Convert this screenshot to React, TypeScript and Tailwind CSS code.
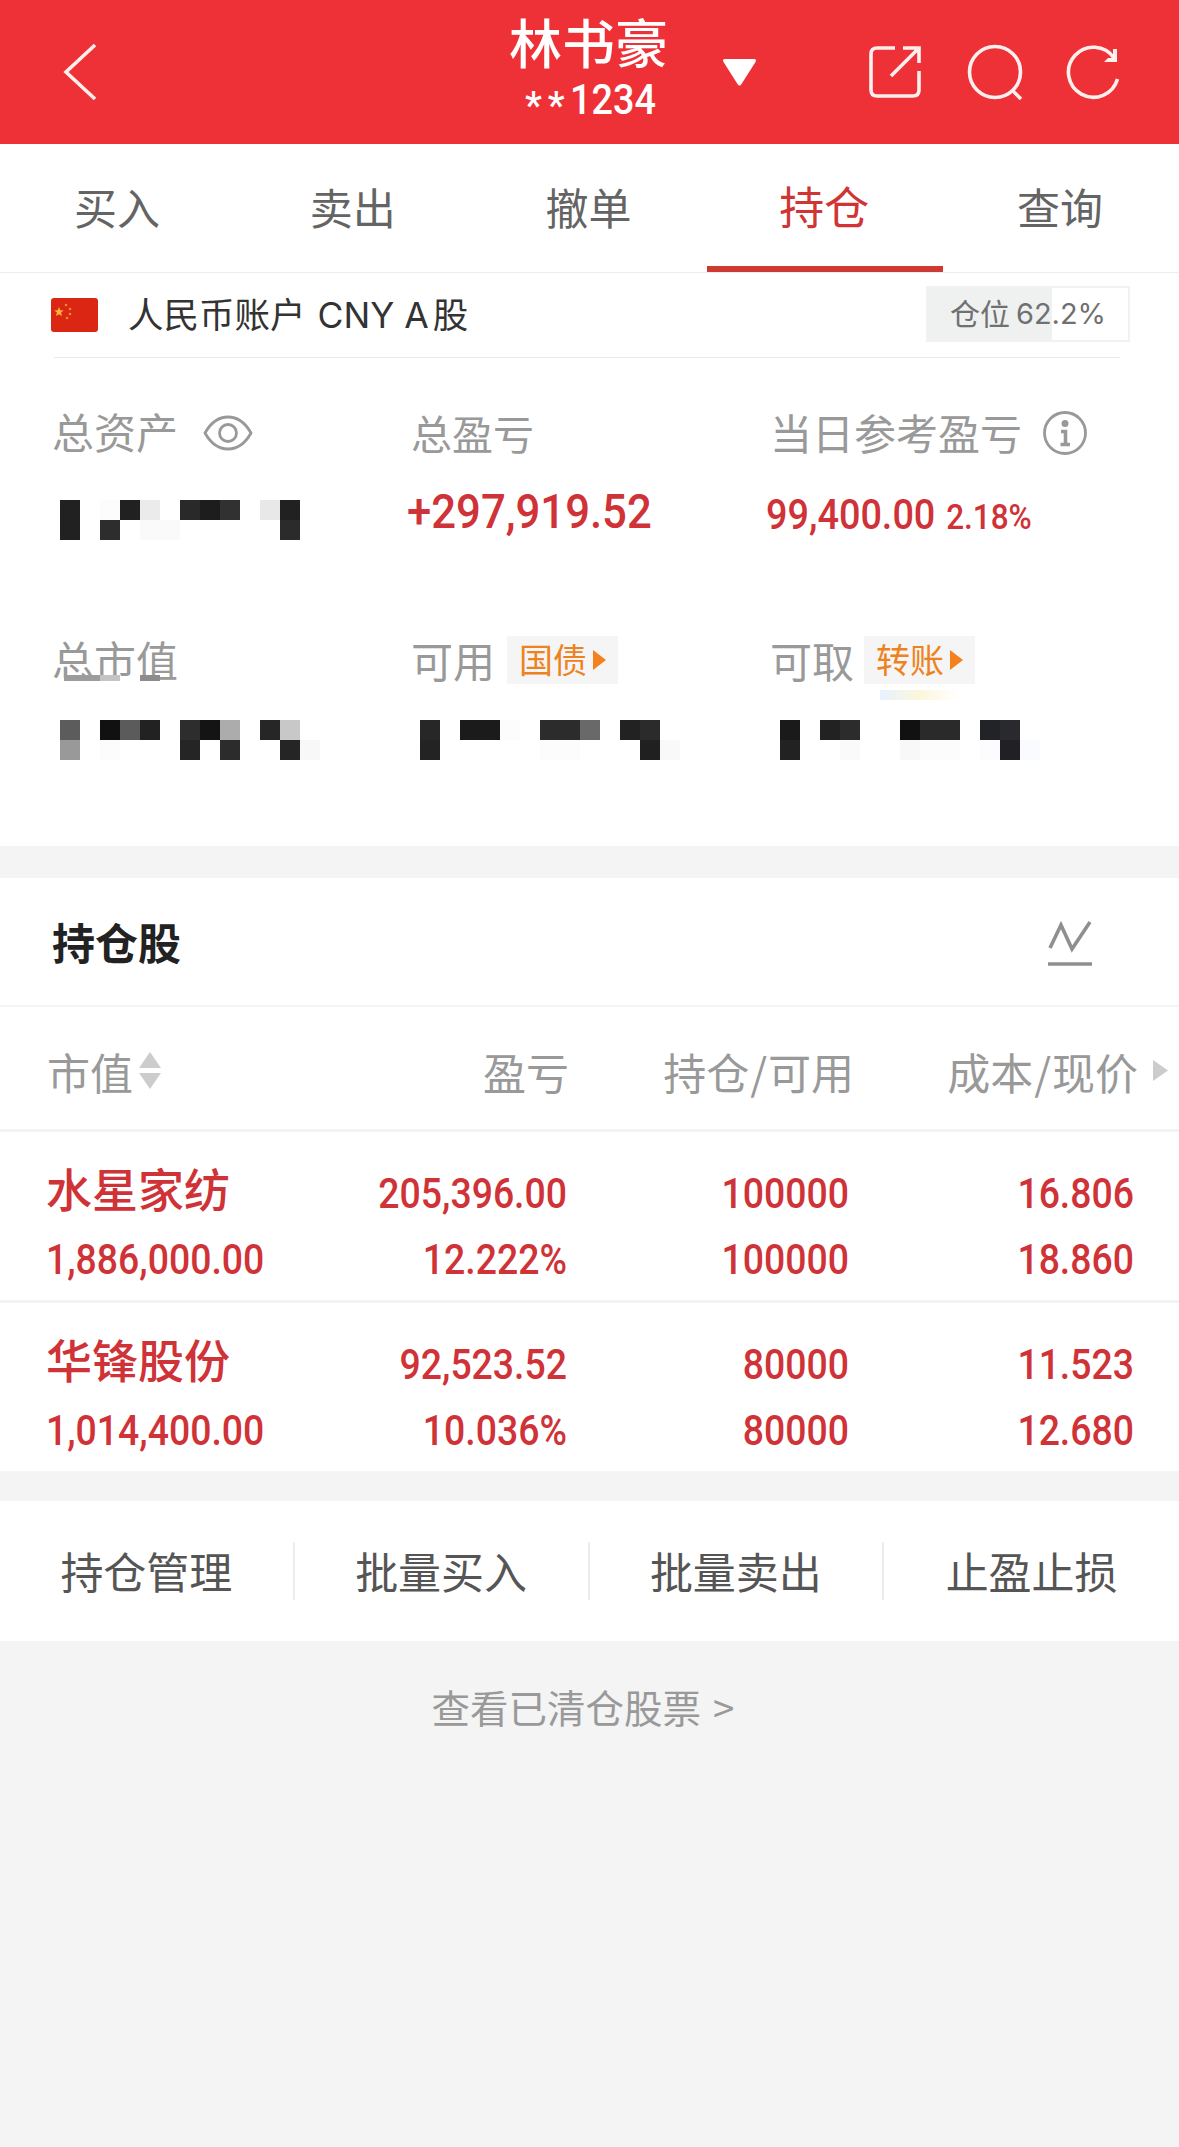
import type { ReactNode } from 'react'
import clsx from 'clsx'

const tabs = ['买入', '卖出', '撤单', '持仓', '查询']
const actions = ['持仓管理', '批量买入', '批量卖出', '止盈止损']

const holdings = [
  {
    name: '水星家纺',
    value: '1,886,000.00',
    profit: '205,396.00',
    rate: '12.222%',
    amount: '100000',
    usable: '100000',
    cost: '16.806',
    price: '18.860',
  },
  {
    name: '华锋股份',
    value: '1,014,400.00',
    profit: '92,523.52',
    rate: '10.036%',
    amount: '80000',
    usable: '80000',
    cost: '11.523',
    price: '12.680',
  },
]

// masked amounts, one colour per 20px block, '' is an empty block
const masks = {
  assets: [
    ['#212121', '', '#fcfcfc', '#212121', '#ebebeb', '', '#292929', '#1d1d1d', '#313131', '', '#e8e8e8', '#212121'],
    ['#212121', '', '#2d2d2d', '', '#fafafa', '#fafafa', '', '', '', '', '', '#2b2b2b'],
  ],
  market: [
    ['#5c5c5c', '', '#111111', '#5b5b5b', '#222222', '', '#2d2d2d', '#141414', '#acacac', '', '#262626', '#c8c8c8'],
    ['#999999', '', '#fcfcfc', '', '', '', '#252525', '', '#2c2c2c', '', '', '#252525', '#f8f8f8'],
  ],
  usable: [
    ['#272727', '', '#1b1b1b', '#1b1b1b', '#fcfcfc', '', '#2c2c2c', '#2c2c2c', '#696969', '', '#222222', '#2b2b2b'],
    ['#232323', '', '', '', '', '', '#fcfcfc', '#fcfcfc', '', '', '', '#202020', '#f9f9f9'],
  ],
  cash: [
    ['#1a1a1a', '', '#222222', '#2c2c2c', '', '', '#111111', '#2a2a2a', '#2a2a2a', '', '#222326', '#2a2a2e'],
    ['#222222', '', '', '#fafafa', '', '', '#f8f8f8', '#fcfcfc', '#fcfcfc', '', '#fcfcff', '#212125', '#fafbff'],
  ],
}

function Mask({ rows }: { rows: string[][] }) {
  return (
    <div className="ml-2">
      {rows.map((row, i) => (
        <div key={i} className="flex h-5">
          {row.map((color, j) => (
            <span key={j} className="h-5 w-5" style={{ backgroundColor: color || 'transparent' }} />
          ))}
        </div>
      ))}
    </div>
  )
}

function Tag({ children }: { children: ReactNode }) {
  return (
    <span className="flex h-12 items-center gap-1.5 bg-[#f5f5f5] px-3 text-[34px] text-[#ef8220]">
      <span className="-translate-y-px">{children}</span>
      <svg width="13" height="20" viewBox="0 0 13 20" fill="#f5801e">
        <path d="M0 0l13 10L0 20z" />
      </svg>
    </span>
  )
}

function Header() {
  return (
    <header className="flex h-36 items-center bg-[#ee3137] text-white">
      <svg className="ml-[63px]" width="34" height="58" viewBox="0 0 34 58" fill="none" stroke="#fff0ee" strokeWidth="3.6">
        <path d="M32 2L3 29l29 27" />
      </svg>
      <div className="mb-[12px] ml-[412px] flex w-[161px] flex-col">
        <span className="h-[67px] text-[53px] leading-[67px] font-medium">林书豪</span>
        <span className="flex h-[50px] items-center pl-4 font-[Roboto] text-[42px] leading-[50px] font-medium">
          <span className="w-[45px] pt-3 text-[38px] tracking-[6px]">**</span>
          <span className="origin-left scale-x-90">1234</span>
        </span>
      </div>
      <svg className="ml-[53px]" width="33" height="27" viewBox="0 0 33 27" fill="#fff">
        <path d="M2 0h29q3 0 1.500 3L18.500 25q-2 3-4 0L.5 3Q-1 0 2 0z" />
      </svg>
      <svg className="ml-[113px]" width="52" height="54" viewBox="0 0 52 54" fill="none" stroke="#fff0ee" strokeWidth="3.6">
        <path d="M26 3H8q-6 0-6 6v36q0 6 6 6h36q6 0 6-6V26" />
        <path d="M34 3h16v15M49 4L22 31" />
      </svg>
      <svg className="ml-[46px]" width="56" height="56" viewBox="0 0 56 56" fill="none" stroke="#fff0ee" strokeWidth="3.6">
        <circle cx="28" cy="28" r="25.500" />
        <path d="M45 46l9 9" />
      </svg>
      <svg className="ml-[42px]" width="56" height="56" viewBox="0 0 56 56" fill="none" stroke="#fff0ee" strokeWidth="3.6">
        <path d="M52.500 35A25 25 0 1 1 49 14" />
        <path d="M52 5v13H39l4-4h5V5z" fill="#fff0ee" stroke="none" />
      </svg>
    </header>
  )
}

function Tabs() {
  return (
    <nav className="grid h-[129px] grid-cols-5 border-b border-[#ededed] bg-white text-[43px] text-[#646464]">
      {tabs.map((tab) => (
        <div
          key={tab}
          className={clsx(
            'flex items-center justify-center border-y-6 border-transparent pr-0.5 pb-1',
            tab === '持仓' && 'border-b-[#cd3a34] text-[45px] text-[#d13434]',
          )}
        >
          {tab}
        </div>
      ))}
    </nav>
  )
}

function Account() {
  return (
    <div className="mr-[49px] ml-[51px] flex h-[84px] items-center">
      <svg width="47" height="34" viewBox="0 0 47 34" fill="#f4892a">
        <rect width="47" height="34" rx="3" fill="#db2614" />
        <path d="M8 9l1.300 3.200 3.400.2-2.600 2.200.8 3.400L8 16.200 5.100 18l.8-3.400-2.600-2.200 3.400-.2z" fill="#ffb43a" />
        <circle cx="15" cy="7" r="1.300" />
        <circle cx="19" cy="11" r="1.300" />
        <circle cx="19" cy="16" r="1.300" />
        <circle cx="16" cy="20" r="1.300" />
      </svg>
      <div className="ml-[30px] flex flex-1 -translate-y-px items-baseline text-[35.5px] text-[#333]">
        人民币账户
        <span className="mr-1 ml-3 font-[Inter] text-[35.5px]">CNY A</span>股
      </div>
      <div className="mt-[-3px] flex h-14 w-[204px] items-center justify-center border-2 border-[#f0f1f1] bg-[linear-gradient(90deg,#eff0f0_62.2%,#fff_62.2%)] text-[30px] text-[#707070]">
        <span className="-translate-y-px">仓位</span>
        <span className="ml-1.5 font-[Inter] text-[29px]">62.2%</span>
      </div>
    </div>
  )
}

function Summary() {
  return (
    <section className="h-[573px] bg-white">
      <Account />
      <div className="mr-[59px] ml-[54px] h-px bg-[#e9e9e9]" />
      <div className="grid h-[187px] grid-cols-[359px_359px_1fr] pt-[44px] pl-[52px] text-[42px] leading-[62px] text-[#999]">
        <div>
          <div className="flex items-center">
            <span className="-translate-y-0.5">总资产</span>
            <svg className="ml-[25px]" width="50" height="36" viewBox="0 0 50 36" fill="none" stroke="#999" strokeWidth="2.800">
              <path d="M2 18Q11 2 25 2t23 16Q39 34 25 34T2 18z" />
              <circle cx="25" cy="18" r="8.500" />
            </svg>
          </div>
          <div className="mt-[36px]">
            <Mask rows={masks.assets} />
          </div>
        </div>
        <div>
          <div className="-translate-y-px text-[41px]">总盈亏</div>
          <div className="mt-[17px] -ml-1 origin-left scale-x-91 font-[Roboto] text-[48px] font-medium whitespace-nowrap text-[#cf3237]">
            +297,919.52
          </div>
        </div>
        <div>
          <div className="flex items-center">
            <span className="-translate-y-px">当日参考盈亏</span>
            <svg className="ml-[20px]" width="46" height="46" viewBox="0 0 46 46" fill="none" stroke="#999" strokeWidth="2.800">
              <circle cx="23" cy="23" r="20.500" />
              <circle cx="23" cy="13.500" r="3.500" fill="#999" stroke="none" />
              <path d="M19 21.500h4.500V34M18.500 34.500h9.500" strokeWidth="3.600" />
            </svg>
          </div>
          <div className="mt-[20px] -ml-1 flex origin-left scale-x-90 items-baseline gap-3 font-[Roboto] font-medium text-[#cf3237]">
            99,400.00<span className="text-[35px]">2.18%</span>
          </div>
        </div>
      </div>

      <div className="grid grid-cols-[360px_360px_1fr] pt-[85px] pl-[52px] text-[42px] leading-[60px] text-[#999]">
        <div>
          <div className="relative">
            <span className="inline-block -translate-y-px">总市值</span>
            <div className="absolute top-[45px] left-[12px] flex h-1.5">
              <span className="w-[36px] bg-[#9c9c9c]" />
              <span className="w-5 bg-[#c4c4c4]" />
              <span className="ml-5 w-5 bg-[#8c8c8c]" />
            </div>
          </div>
          <div className="mt-[30px]">
            <Mask rows={masks.market} />
          </div>
        </div>
        <div>
          <div className="-ml-px flex items-center gap-3">
            可用<Tag>国债</Tag>
          </div>
          <div className="mt-[30px]">
            <Mask rows={masks.usable} />
          </div>
        </div>
        <div>
          <div className="relative -ml-0.5 flex items-center gap-2.5">
            可取<Tag>转账</Tag>
            <div className="absolute top-[60px] left-[110px] h-2.5 w-[80px] bg-linear-to-r from-[#e6f2ff] via-[#fdf6dc] to-white" />
          </div>
          <div className="mt-[30px]">
            <Mask rows={masks.cash} />
          </div>
        </div>
      </div>
    </section>
  )
}

function Cell({ top, bottom }: { top: string; bottom: string }) {
  return (
    <div className="flex origin-right scale-x-89 flex-col items-end pt-1">
      <span>{top}</span>
      <span>{bottom}</span>
    </div>
  )
}

function Holdings() {
  return (
    <section className="mt-8 bg-white">
      <div className="flex h-[129px] items-center justify-between border-b-2 border-[#f5f5f5] pr-[87px] pl-[52px]">
        <h2 className="text-[43px] font-bold text-[#222]">持仓股</h2>
        <svg className="mt-1" width="44" height="46" viewBox="0 0 44 46" fill="none" stroke="#8f8f8f" strokeWidth="3.600">
          <path d="M2 27L13 4l11 24L42 1" />
          <path d="M0 43h44" />
        </svg>
      </div>
      <div className="grid h-[125px] grid-cols-[350px_219px_285px_284px_1fr] items-center border-b-3 border-[#f3f3f3] pt-1.5 text-right text-[43px] text-[#999]">
        <div className="flex items-center gap-1.5 pl-[47px]">
          市值
          <svg className="-mt-0.5" width="22" height="37" viewBox="0 0 22 37" fill="#ccc">
            <path d="M11 0l11 16H0zM0 21h22L11 37z" />
          </svg>
        </div>
        <div>盈亏</div>
        <div>
          持仓<span className="px-px">/</span>可用
        </div>
        <div>
          成本<span className="px-px">/</span>现价
        </div>
        <svg className="-mt-0.5 ml-[15px]" width="15" height="21" viewBox="0 0 15 21" fill="#ccc">
          <path d="M0 0l15 10.500L0 21z" />
        </svg>
      </div>
      {holdings.map((item) => (
        <div
          key={item.name}
          className="grid h-[171px] grid-cols-[350px_217px_282px_285px] border-b-3 border-[#f3f3f3] pt-[25px] font-[Roboto] text-[42px] leading-[66px] font-medium text-[#cf3237] last:h-[168px] last:border-0"
        >
          <div className="flex flex-col pl-[46px]">
            <span className="-mt-[3px] mb-[7px] font-['Noto_Sans_CJK_SC',sans-serif] text-[46px]">{item.name}</span>
            <span className="origin-left scale-x-89">{item.value}</span>
          </div>
          <Cell top={item.profit} bottom={item.rate} />
          <Cell top={item.amount} bottom={item.usable} />
          <Cell top={item.cost} bottom={item.price} />
        </div>
      ))}
    </section>
  )
}

function Actions() {
  return (
    <div className="mt-[30px] grid h-[140px] grid-cols-4 items-center bg-white text-[43px] text-[#555]">
      {actions.map((action) => (
        <div key={action} className="flex h-[58px] items-center justify-center border-r-2 border-[#ececec] pb-0.5 last:border-0">
          {action}
        </div>
      ))}
    </div>
  )
}

export default function App() {
  return (
    <div className="h-[2147px] w-[1179px] overflow-hidden bg-[#f4f4f4] font-['Noto_Sans_CJK_SC',sans-serif]">
      <Header />
      <Tabs />
      <Summary />
      <Holdings />
      <Actions />
      <div className="mt-[33px] flex justify-center gap-3 pr-[13px] text-[38.5px] leading-[64px] text-[#999]">
        查看已清仓股票<span>&gt;</span>
      </div>
    </div>
  )
}
